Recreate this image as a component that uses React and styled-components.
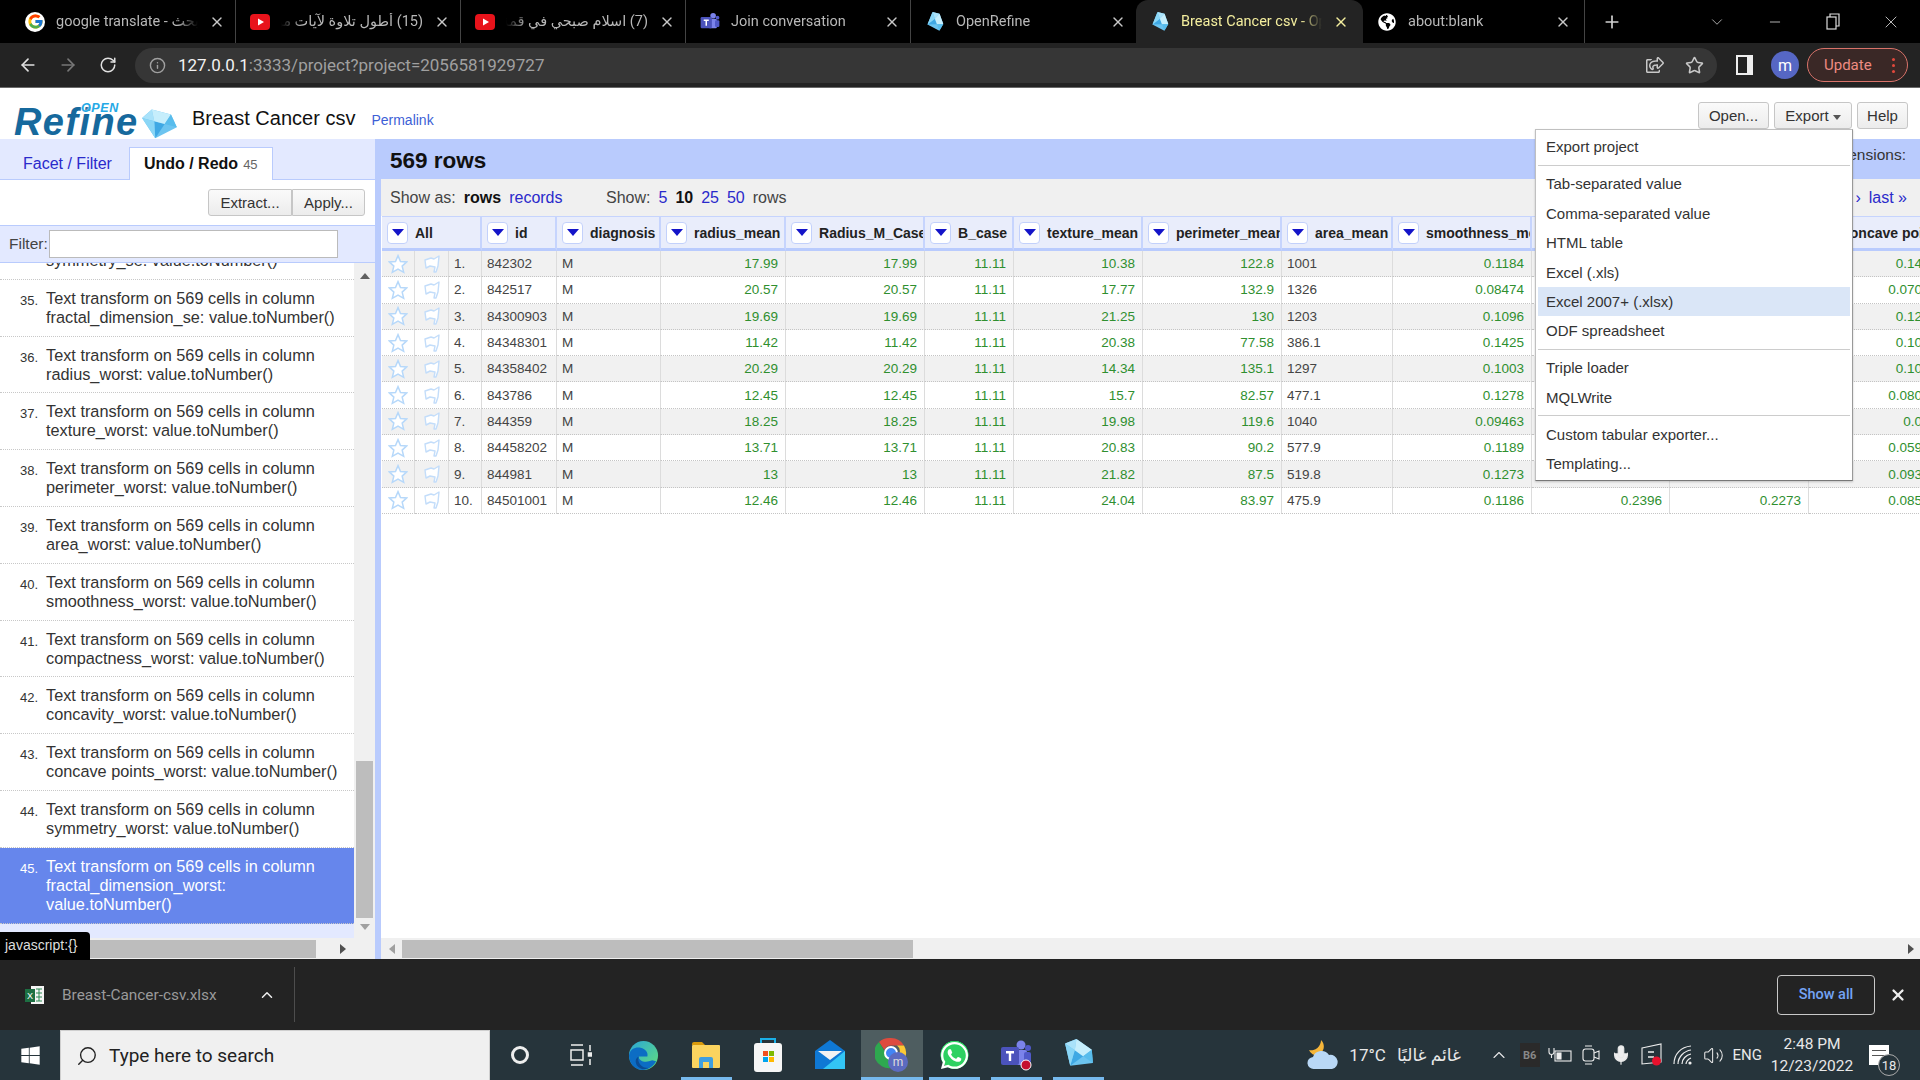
import styled, { createGlobalStyle } from "styled-components";
import { ArrowLeft, ArrowRight, RotateCw, Info, Star, X, Plus, ChevronDown, ChevronUp, Minus, Mic, Volume2, Search } from "lucide-react";
import { FcGoogle } from "react-icons/fc";
import { FaWhatsapp, FaGlobeAmericas, FaWindows, FaRegShareSquare } from "react-icons/fa";

const GlobalStyle = createGlobalStyle`
  html, body { margin: 0; padding: 0; width: 1920px; height: 1080px; overflow: hidden; background: #fff; }
  body { font-family: "Liberation Sans", Arial, sans-serif; }
  * { box-sizing: border-box; }
`;

const UI_FONT = `Roboto, "DejaVu Sans", sans-serif`;

const Frame = styled.div`
  display: flex;
  flex-direction: column;
  width: 1920px;
  height: 1080px;
`;

/* ---------- browser chrome ---------- */
const TabStrip = styled.div`
  display: flex;
  align-items: flex-end;
  height: 43px;
  background: #000;
  padding-left: 11px;
  font-family: ${UI_FONT};
`;

const Tab = styled.div`
  display: flex;
  align-items: center;
  gap: 11px;
  width: ${(p) => p.$w || 225}px;
  height: 43px;
  padding: 0 ${(p) => p.$pr || 10}px 0 14px;
  color: ${(p) => (p.$active ? "#f4ee9e" : "#b8b8b8")};
  background: ${(p) => (p.$active ? "#232323" : "transparent")};
  border-radius: ${(p) => (p.$active ? "12px 12px 0 0" : "0")};
  border-right: ${(p) => (p.$active || p.$noSep ? "none" : "1px solid #444")};
  font-size: 14.5px;
`;

const TabTitle = styled.div`
  flex: 1;
  overflow: hidden;
  white-space: nowrap;
  direction: ${(p) => (p.$rtl ? "rtl" : "ltr")};
  mask-image: ${(p) =>
    p.$rtl
      ? "linear-gradient(to left, #000 85%, transparent)"
      : "linear-gradient(to right, #000 85%, transparent)"};
`;

const Favicon = styled.span`
  display: inline-flex;
  align-items: center;
  justify-content: center;
  width: 20px;
  height: 20px;
  flex: none;
  border-radius: ${(p) => (p.$round ? "50%" : "0")};
  background: ${(p) => (p.$round ? "#fff" : "transparent")};
`;

const TabClose = styled(X)`
  flex: none;
  width: 16px;
  height: 16px;
  color: ${(p) => p.color || "#c8c8c8"};
`;

const NewTab = styled.div`
  display: flex;
  align-items: center;
  height: 43px;
  margin-left: 17px;
  color: #d0d0d0;
`;

const WindowControls = styled.div`
  display: flex;
  align-items: center;
  height: 43px;
  margin-left: auto;
  color: #ddd;
`;

const WindowButton = styled.div`
  display: flex;
  align-items: center;
  justify-content: center;
  width: 58px;
`;

const Toolbar = styled.div`
  display: flex;
  align-items: center;
  height: 45px;
  background: #232323;
  border-bottom: 1px solid #6a6a6a;
  font-family: ${UI_FONT};
  color: #dcdcdc;
`;

const NavButton = styled.div`
  display: flex;
  justify-content: center;
  width: 40px;
  color: ${(p) => (p.$dim ? "#777" : "#e0e0e0")};
  &:first-child { margin-left: 8px; }
`;

const UrlBox = styled.div`
  display: flex;
  align-items: center;
  width: 1582px;
  height: 35px;
  margin-left: 7px;
  padding: 0 13px 0 14px;
  border-radius: 18px;
  background: #363636;
  font-size: 17px;
  color: #a0a0a0;
`;

const UrlHost = styled.span`
  color: #f2f2f2;
  margin-left: 12px;
`;

const UrlActions = styled.div`
  display: flex;
  gap: 21px;
  align-items: center;
  margin-left: auto;
  color: #c8c8c8;
`;

const SidePanelIcon = styled.span`
  width: 17px;
  height: 20px;
  margin-left: 19px;
  border: 2px solid #eee;
  border-right-width: 6px;
  flex: none;
`;

const Avatar = styled.span`
  display: flex;
  align-items: center;
  justify-content: center;
  width: 28px;
  height: 28px;
  margin-left: 18px;
  border-radius: 50%;
  background: #5667c4;
  color: #fff;
  font-size: 16px;
  flex: none;
`;

const UpdatePill = styled.div`
  display: flex;
  align-items: center;
  justify-content: space-between;
  width: 101px;
  height: 34px;
  margin-left: 8px;
  padding: 0 12px 0 16px;
  border: 1px solid #d9736a;
  border-radius: 17px;
  background: #3a2826;
  color: #ee8b82;
  font-size: 15px;
`;

const RedDots = styled.span`
  width: 3px;
  height: 3px;
  border-radius: 50%;
  background: #e2483c;
  box-shadow: 0 -6px 0 #e2483c, 0 6px 0 #e2483c;
`;

/* ---------- page ---------- */
const Page = styled.div`
  position: relative;
  display: flex;
  flex-direction: column;
  height: 871px;
  color: #222;
`;

const Header = styled.header`
  display: flex;
  align-items: center;
  height: 51px;
  padding: 9px 0 0 14px;
  flex: none;
`;

const Logo = styled.div`
  position: relative;
  display: flex;
  align-items: center;
  width: 178px;
  height: 50px;
`;

const LogoWord = styled.span`
  font: italic bold 38px "Liberation Sans", Arial, sans-serif;
  letter-spacing: 1.4px;
  color: #16699d;
  margin-top: 9px;
`;

const LogoOpen = styled.span`
  position: absolute;
  left: 67px;
  top: 8px;
  font: italic bold 12.5px "Liberation Sans", Arial, sans-serif;
  letter-spacing: 0.6px;
  color: #25a9e6;
  text-shadow: 0 0 2px #fff;
`;

const LogoGem = styled.span`
  display: flex;
  margin-left: 2px;
  margin-top: 12px;
`;

const ProjectName = styled.span`
  font-size: 20px;
  color: #111;
`;

const Permalink = styled.a`
  font-size: 14px;
  margin-left: 16px;
  margin-top: 3px;
  color: #3d5fd6;
`;

const HeaderButtons = styled.div`
  display: flex;
  gap: 5px;
  margin-left: auto;
  padding-right: 12px;
  margin-top: -5px;
`;

const GreyButton = styled.button`
  display: inline-flex;
  align-items: center;
  justify-content: center;
  gap: 4px;
  width: ${(p) => p.$w}px;
  height: 27px;
  padding: 0;
  border: 1px solid #c6c6c6;
  border-radius: ${(p) => p.$radius || "3px"};
  background: linear-gradient(#fafafa, #ececec);
  font: 15px "Liberation Sans", Arial, sans-serif;
  color: #333;
`;

const Caret = styled.span`
  width: 0;
  height: 0;
  border-left: 4px solid transparent;
  border-right: 4px solid transparent;
  border-top: 5px solid #555;
  margin-top: 3px;
`;

const Main = styled.div`
  display: flex;
  flex: 1;
  min-height: 0;
`;

const LeftPanel = styled.aside`
  display: flex;
  flex-direction: column;
  width: 375px;
  flex: none;
  background: #e3e9ff;
`;

const LeftTabs = styled.div`
  display: flex;
  align-items: flex-end;
  height: 41px;
  flex: none;
  border-bottom: 1px solid #b9cbfd;
`;

const LeftTab = styled.div`
  display: flex;
  align-items: baseline;
  gap: 5px;
  height: ${(p) => (p.$active ? "33px" : "32px")};
  padding: 7px 14px 0;
  margin-left: ${(p) => (p.$active ? "3px" : "9px")};
  margin-bottom: -1px;
  font-size: 16px;
  font-weight: ${(p) => (p.$active ? "bold" : "normal")};
  color: ${(p) => (p.$active ? "#111" : "#2a2acb")};
  background: ${(p) => (p.$active ? "#fff" : "transparent")};
  border: ${(p) => (p.$active ? "1px solid #b9cbfd" : "none")};
  border-bottom: none;
`;

const TabCount = styled.span`
  font-size: 13px;
  font-weight: normal;
  color: #666;
`;

const ExtractRow = styled.div`
  display: flex;
  justify-content: flex-end;
  align-items: center;
  height: 45px;
  flex: none;
  padding: 0 10px 0 0;
  background: #fff;
`;

const FilterRow = styled.div`
  display: flex;
  align-items: center;
  height: 38px;
  flex: none;
  padding-left: 9px;
  font-size: 15.5px;
  color: #444;
  border-top: 1px solid #b9cbfd;
  border-bottom: 1px solid #b9cbfd;
`;

const FilterInput = styled.div`
  width: 289px;
  height: 28px;
  margin-left: 1px;
  background: #fff;
  border: 1px solid #bbb;
`;

const ListArea = styled.div`
  display: flex;
  flex: 1;
  min-height: 0;
`;

const HistoryList = styled.div`
  flex: 1;
  overflow: hidden;
`;

const HistoryInner = styled.div`
  margin-top: -40px;
`;

const HistoryItem = styled.div`
  display: flex;
  padding: 9px 8px 8.8px 20px;
  line-height: 19px;
  font-size: 16.3px;
  color: ${(p) => (p.$current ? "#fff" : "#333")};
  background: ${(p) => (p.$current ? "#6686ec" : "#fff")};
  border-bottom: 1px dotted #c8c8c8;
`;

const HistoryNum = styled.span`
  width: 26px;
  flex: none;
  font-size: 13px;
  padding-top: 2px;
`;

const VScroll = styled.div`
  display: flex;
  flex-direction: column;
  align-items: center;
  width: 21px;
  flex: none;
  background: #f0f0f0;
`;

const VThumb = styled.div`
  width: 17px;
  height: 157px;
  margin-top: auto;
  background: #bdbdbd;
`;

const ArrowUp = styled.span`
  margin: 10px 0 0;
  border-left: 5px solid transparent;
  border-right: 5px solid transparent;
  border-bottom: 6px solid #606060;
`;

const ArrowDown = styled.span`
  margin: 6px 0 8px;
  border-left: 5px solid transparent;
  border-right: 5px solid transparent;
  border-top: 6px solid #a0a0a0;
`;

const HScroll = styled.div`
  display: flex;
  align-items: center;
  height: 21px;
  flex: none;
  background: #f0f0f0;
`;

const HThumb = styled.div`
  height: 18px;
  width: ${(p) => p.$w}px;
  margin-left: ${(p) => p.$ml}px;
  background: #bdbdbd;
`;

const ArrowRightTri = styled.span`
  margin-left: ${(p) => p.$ml || "auto"};
  margin-right: ${(p) => p.$mr || 0}px;
  border-top: 5px solid transparent;
  border-bottom: 5px solid transparent;
  border-left: 6px solid #505050;
`;

const ArrowLeftTri = styled.span`
  margin-left: 8px;
  border-top: 5px solid transparent;
  border-bottom: 5px solid transparent;
  border-right: 6px solid #a0a0a0;
`;

const RightPanel = styled.section`
  display: flex;
  flex-direction: column;
  flex: 1;
  min-width: 0;
  border-left: 6px solid #b9cbfd;
`;

const TitleBar = styled.div`
  display: flex;
  align-items: center;
  justify-content: space-between;
  height: 40px;
  flex: none;
  margin-left: -6px;
  padding: 3px 14px 0 15px;
  background: #b9cbfd;
`;

const RowCount = styled.h2`
  margin: 0;
  font-size: 22.5px;
  color: #111;
`;

const ExtensionsLabel = styled.span`
  margin-top: -11px;
  font-size: 15.5px;
  color: #333;
`;

const ShowBar = styled.div`
  display: flex;
  align-items: center;
  height: 37px;
  flex: none;
  padding: 0 13px 0 9px;
  background: #f0f0f0;
  font-size: 16px;
  color: #444;
`;

const ShowGroup = styled.div`
  display: flex;
  gap: ${(p) => p.$gap || 8}px;
  width: ${(p) => p.$w || "auto"};
`;

const Strong = styled.b`
  color: #111;
`;

const BlueLink = styled.a`
  color: #2a2acb;
`;

const Pager = styled.div`
  display: flex;
  gap: 8px;
  margin-left: auto;
`;

const TableWrap = styled.div`
  flex: 1;
  min-height: 0;
  overflow: hidden;
`;

const DataTable = styled.table`
  width: 1563px;
  margin-left: 1px;
  table-layout: fixed;
  border-collapse: separate;
  border-spacing: 0;
  font-size: 13.5px;
`;

const HeadCell = styled.th`
  height: 35px;
  padding: 0 0 0 5px;
  background: #e9edfb;
  border-top: 1px solid #c6d4fd;
  border-bottom: 3px solid #b9cbfd;
  border-right: 2px solid #c6d4fd;
  text-align: left;
  font-size: 14px;
  font-weight: bold;
  color: #222;
`;

const HeadInner = styled.div`
  display: flex;
  align-items: center;
  gap: 7px;
  overflow: hidden;
  white-space: nowrap;
`;

const ColumnMenuButton = styled.span`
  display: flex;
  align-items: center;
  justify-content: center;
  width: 21px;
  height: 22px;
  flex: none;
  background: #fff;
  border: 1px solid #c3d1fb;
  border-radius: 4px;
`;

const BlueTriangle = styled.span`
  border-left: 6px solid transparent;
  border-right: 6px solid transparent;
  border-top: 7px solid #1414c8;
`;

const BodyRow = styled.tr`
  background: ${(p) => (p.$odd ? "#f1f1f1" : "#fff")};
`;

const Cell = styled.td`
  height: 26.3px;
  padding: ${(p) => (p.$num ? "0 7px 0 5px" : "0 5px")};
  border-bottom: 1px dotted #c4c4c4;
  border-right: 1px solid #dcdcdc;
  text-align: ${(p) => (p.$num ? "right" : "left")};
  color: ${(p) => (p.$num ? "#2f8f2f" : "#444")};
  white-space: nowrap;
  overflow: hidden;
`;

const IconCell = styled(Cell)`
  padding: 0;
  text-align: center;
  line-height: 0;
`;

/* ---------- export menu ---------- */
const ExportMenu = styled.div`
  position: absolute;
  top: 41px;
  right: 67px;
  width: 318px;
  height: 352px;
  padding: 2px;
  background: #fff;
  border: 1px solid #c0c0c0;
  border-bottom-color: #777;
  border-right-color: #999;
  box-shadow: 0 1px 2px rgba(0, 0, 0, 0.2);
  font-size: 15px;
  color: #333;
`;

const MenuItem = styled.div`
  display: flex;
  align-items: center;
  height: 29.4px;
  padding-left: 8px;
  background: ${(p) => (p.$hover ? "#dae6f7" : "transparent")};
`;

const MenuSeparator = styled.div`
  height: 1px;
  margin: 3.4px 0;
  background: #ccc;
`;

const StatusBubble = styled.div`
  position: absolute;
  left: 0;
  bottom: -1px;
  width: 90px;
  height: 28px;
  padding: 5px 0 0 5px;
  background: #000;
  border-top-right-radius: 4px;
  color: #ddd;
  font-size: 14px;
`;

/* ---------- download bar ---------- */
const DownloadBar = styled.div`
  display: flex;
  align-items: center;
  height: 71px;
  flex: none;
  background: #232323;
  font-family: ${UI_FONT};
`;

const DownloadItem = styled.div`
  display: flex;
  align-items: center;
  width: 295px;
  height: 55px;
  padding-left: 25px;
  border-right: 1px solid #4d4d4d;
  color: #9a9a9a;
  font-size: 15.4px;
`;

const DownloadName = styled.span`
  margin-left: 17px;
  width: 196px;
`;

const ShowAll = styled.div`
  display: flex;
  align-items: center;
  justify-content: center;
  width: 98px;
  height: 40px;
  margin-left: auto;
  border: 1px solid #c8c8c8;
  border-radius: 4px;
  color: #74a3f5;
  font-size: 14.5px;
  font-weight: 500;
`;

const CloseBar = styled.div`
  display: flex;
  justify-content: center;
  width: 45px;
  color: #eee;
`;

/* ---------- taskbar ---------- */
const Taskbar = styled.div`
  display: flex;
  align-items: center;
  height: 50px;
  flex: none;
  background: #26343b;
  color: #eee;
  font-family: ${UI_FONT};
`;

const StartButton = styled.div`
  display: flex;
  align-items: center;
  justify-content: center;
  width: 60px;
  color: #fff;
`;

const SearchBox = styled.div`
  display: flex;
  align-items: center;
  gap: 11px;
  width: 430px;
  height: 50px;
  padding-left: 15px;
  background: #f0f0f0;
  border: 1px solid #cfcfcf;
  border-width: 1px 1px 0;
  color: #222;
  font-size: 19px;
`;

const TaskSlot = styled.div`
  display: flex;
  align-items: center;
  justify-content: center;
  width: ${(p) => p.$w || 62}px;
  height: 50px;
  background-color: ${(p) => (p.$active ? "#4e5d60" : "transparent")};
  background-image: ${(p) => (p.$open ? "linear-gradient(#76b9ed, #76b9ed)" : "none")};
  background-repeat: no-repeat;
  background-position: center bottom;
  background-size: ${(p) => (p.$active ? "100%" : "51px")} 3px;
`;

const CortanaRing = styled.span`
  width: 18px;
  height: 18px;
  border: 3px solid #eee;
  border-radius: 50%;
`;

const Tray = styled.div`
  display: flex;
  align-items: center;
  margin-left: auto;
  height: 50px;
  font-size: 15px;
  color: #e8e8e8;
`;

const TrayWeather = styled.div`
  display: flex;
  align-items: center;
  gap: 11px;
  font-size: 17px;
  margin-right: 23px;
`;

const TrayIconSlot = styled.div`
  display: flex;
  align-items: center;
  justify-content: center;
  width: 30.6px;
`;

const TrayLang = styled.span`
  margin-left: 4px;
`;

const TrayClock = styled.div`
  width: 100px;
  text-align: center;
  line-height: 22px;
  font-size: 15.5px;
`;

const NotifyBox = styled.div`
  position: relative;
  width: 20px;
  height: 20px;
  margin: 0 31px 0 7px;
  padding: 5px 3px;
  background: #fff;
`;

const NotifyLines = styled.div`
  height: 6px;
  border-top: 1px solid #555;
  border-bottom: 1px solid #555;
`;

const NotifyBadge = styled.span`
  position: absolute;
  right: -11px;
  bottom: -11px;
  display: flex;
  align-items: center;
  justify-content: center;
  width: 22px;
  height: 22px;
  border-radius: 50%;
  background: #26343b;
  border: 1px solid #aaa;
  font-size: 13px;
`;

function Gem({ size = 20, angle = 0 }) {
  return (
    <svg width={size} height={size * 0.8} viewBox="0 0 40 32" style={{ transform: `rotate(${angle}deg)` }}>
      <polygon points="8,2 30,2 40,14 20,32 0,14" fill="#6cc4f0" />
      <polygon points="8,2 14,14 0,14" fill="#a9e2fa" />
      <polygon points="14,14 26,14 20,32" fill="#3fa8e4" />
      <polygon points="8,2 30,2 26,14 14,14" fill="#c6eefc" />
      <polygon points="30,2 40,14 26,14" fill="#58bcec" />
      <polygon points="0,14 14,14 20,32" fill="#8ad6f6" />
    </svg>
  );
}

function YoutubeIcon() {
  return (
    <svg width="20" height="20" viewBox="0 0 20 20">
      <rect x="0" y="2" width="20" height="16" rx="4" fill="#e8131b" />
      <polygon points="8,6.5 14,10 8,13.5" fill="#fff" />
    </svg>
  );
}

function TeamsIcon({ size = 20, dot }) {
  return (
    <svg width={size} height={size} viewBox="0 0 32 32">
      <circle cx="21" cy="6" r="4.5" fill="#7b83eb" />
      <circle cx="28" cy="9" r="3" fill="#5059c9" />
      <rect x="14" y="11" width="13" height="15" rx="2" fill="#7b83eb" />
      <rect x="24" y="13" width="7" height="11" rx="2" fill="#5059c9" />
      <rect x="1" y="8" width="18" height="18" rx="2" fill="#4b53bc" />
      <path d="M6 12h8v2.4h-2.8V22H8.8v-7.6H6z" fill="#fff" />
      {dot && <circle cx="26" cy="26" r="5" fill="#c50f2f" stroke="#fff" />}
    </svg>
  );
}

function EdgeIcon() {
  return (
    <svg width="31" height="31" viewBox="0 0 32 32">
      <defs>
        <linearGradient id="edgeTop" x1="0" y1="0" x2="1" y2="1">
          <stop offset="0" stopColor="#2aa6d8" />
          <stop offset="1" stopColor="#63e07a" />
        </linearGradient>
      </defs>
      <circle cx="16" cy="16" r="15" fill="url(#edgeTop)" />
      <path d="M1 16C2 9 8 7 13 8c5 1 8 5 7 9H11c0 5 7 7 14 4l4 1c-3 6-9 9-14 9C7 31 1 24 1 16z" fill="#0c6dc4" />
      <path d="M11 17c-2 6 3 12 10 12-5 3-12 0-13-6-.5-3 1-5 3-6z" fill="#0b4c94" />
    </svg>
  );
}

function ExplorerIcon() {
  return (
    <svg width="30" height="28" viewBox="0 0 30 28">
      <path d="M1 3a2 2 0 0 1 2-2h8l3 3h-13z" fill="#d99a0b" />
      <rect x="1" y="4" width="28" height="23" rx="1" fill="#fbd45f" />
      <path d="M8 27v-9a2 2 0 0 1 2-2h10a2 2 0 0 1 2 2v9h-4v-6h-6v6z" fill="#3f9fe0" />
    </svg>
  );
}

function StoreIcon() {
  return (
    <svg width="30" height="36" viewBox="0 0 30 36">
      <path d="M8 7V2h14v5" fill="none" stroke="#1ab0e8" strokeWidth="2" />
      <rect x="1" y="6" width="28" height="29" rx="3" fill="#f6f6f6" />
      <rect x="10" y="14" width="5" height="5" fill="#f25022" />
      <rect x="16" y="14" width="5" height="5" fill="#7fba00" />
      <rect x="10" y="20" width="5" height="5" fill="#00a4ef" />
      <rect x="16" y="20" width="5" height="5" fill="#ffb900" />
    </svg>
  );
}

function MailIcon() {
  return (
    <svg width="30" height="30" viewBox="0 0 30 30">
      <polygon points="0,11 15,0 30,11 30,29 0,29" fill="#0f78d4" />
      <polygon points="3,11 27,11 15,20" fill="#f2f2f2" />
      <polygon points="30,11 30,29 8,29" fill="#33c5f5" />
    </svg>
  );
}

function ChromeIcon() {
  return (
    <svg width="34" height="38" viewBox="0 0 34 38">
      <path d="M16 2a15 15 0 0 1 13 7.5H16a7 7 0 0 0-6.5 4.5L4 6a15 15 0 0 1 12-4z" fill="#dd4b3e" />
      <path d="M29 9.5a15 15 0 0 1-13 22.5l6.500-11.500a7 7 0 0 0-.5-11z" fill="#fcc934" />
      <path d="M16 32A15 15 0 0 1 4 6l6 10a7 7 0 0 0 12 4.500z" fill="#2ea84f" />
      <circle cx="16" cy="17" r="6" fill="#4285f4" stroke="#fff" strokeWidth="2" />
      <circle cx="23" cy="26" r="10" fill="#5c6bc0" />
      <text x="23" y="30" textAnchor="middle" fontSize="12" fill="#ddd" fontFamily="Roboto, sans-serif">m</text>
    </svg>
  );
}

const WhatsappDisc = styled.span`
  display: flex;
  color: #fff;
  background: radial-gradient(circle at 50% 48%, #2dd161 62%, transparent 64%);
`;

function FlagIcon() {
  return (
    <svg width="18" height="20" viewBox="0 0 18 20">
      <path d="M2 6l6-2 3 1 5-3-1 10-2 6h-2l1-5-5-1-4 2z" fill="#fff" stroke="#c3ddfa" strokeWidth="1.4" strokeLinejoin="round" />
    </svg>
  );
}

function RowStar() {
  return (
    <svg width="20" height="20" viewBox="0 0 24 24">
      <polygon points="12,2 15,9 22.500,9.500 17,14.500 18.800,22 12,18 5.200,22 7,14.500 1.500,9.500 9,9" fill="#fff" stroke="#b6d8fa" strokeWidth="1.800" />
    </svg>
  );
}

function ExcelIcon() {
  return (
    <svg width="20" height="20" viewBox="0 0 20 20">
      <rect x="6" y="1" width="13" height="18" fill="#f4f4f4" />
      <path d="M11 4h6M11 8h6M11 12h6M11 16h6M14 4v12" stroke="#2c8a52" strokeWidth="1" />
      <rect x="0" y="4" width="10" height="13" fill="#1d6f42" />
      <text x="5" y="14" textAnchor="middle" fontSize="9" fill="#fff" fontFamily="Liberation Sans">X</text>
    </svg>
  );
}

function WeatherIcon() {
  return (
    <svg width="32" height="32" viewBox="0 0 32 32">
      <path d="M15 1a9 9 0 0 1-3 15 8 8 0 0 1-9-5 10 10 0 0 0 12-10z" fill="#f6b63a" />
      <path d="M8 30a6 6 0 0 1-1-12 9 9 0 0 1 16-2 7 7 0 0 1 3 14z" fill="#b9d8f6" />
    </svg>
  );
}

function RestoreIcon() {
  return (
    <svg width="15" height="17" viewBox="0 0 15 17" fill="none" stroke="#ddd" strokeWidth="1.200">
      <rect x="1" y="4" width="9" height="12" />
      <path d="M4 4V1h9v12h-3" />
    </svg>
  );
}

function PlugBatteryIcon() {
  return (
    <svg width="24" height="16" viewBox="0 0 24 16" fill="none" stroke="#eee" strokeWidth="1.100">
      <rect x="7" y="4" width="16" height="10" />
      <rect x="9" y="6" width="4" height="6" fill="#eee" />
      <path d="M1 1v4a2.500 2.500 0 0 0 5 0V1M3.500 8v3" />
    </svg>
  );
}

function MeetIcon() {
  return (
    <svg width="20" height="22" viewBox="0 0 20 22" fill="none" stroke="#eee" strokeWidth="1.100">
      <rect x="2" y="5" width="11" height="12" rx="2.500" />
      <path d="M13 9l5-2v8l-5-2" />
      <path d="M4 2h7M4 20h7" />
    </svg>
  );
}

function ScreenRecordIcon() {
  return (
    <svg width="22" height="24" viewBox="0 0 22 24">
      <path d="M1 5l19-4v18l-19 2z" fill="none" stroke="#eee" strokeWidth="1.100" />
      <path d="M7 9h6M7 14h6" stroke="#eee" strokeWidth="1.500" />
      <circle cx="15.500" cy="18" r="4.500" fill="#e8112d" />
    </svg>
  );
}

function WifiCornerIcon() {
  return (
    <svg width="20" height="20" viewBox="0 0 20 20" fill="none" stroke="#eee" strokeWidth="1.200">
      <path d="M1 19C1 9 8 2 18 1M5 19C5 12 11 6 18 5M9 19c0-5 4-9 9-10M13 19c0-2 2-5 5-6" />
      <circle cx="17" cy="18" r="1.600" fill="#eee" stroke="none" />
    </svg>
  );
}

const BrandBox = styled.span`
  display: flex;
  align-items: center;
  justify-content: center;
  width: 20px;
  height: 24px;
  background: #2a2a2a;
  color: #888;
  font-size: 11px;
  font-weight: bold;
`;

const historyRows = [
  [34, "symmetry_se: value.toNumber()"],
  [35, "fractal_dimension_se: value.toNumber()"],
  [36, "radius_worst: value.toNumber()"],
  [37, "texture_worst: value.toNumber()"],
  [38, "perimeter_worst: value.toNumber()"],
  [39, "area_worst: value.toNumber()"],
  [40, "smoothness_worst: value.toNumber()"],
  [41, "compactness_worst: value.toNumber()"],
  [42, "concavity_worst: value.toNumber()"],
  [43, "concave points_worst: value.toNumber()"],
  [44, "symmetry_worst: value.toNumber()"],
  [45, "fractal_dimension_worst: value.toNumber()"],
];

const colWidths = [33, 34, 33, 75, 104, 125, 139, 89, 129, 139, 111, 139, 138, 139, 136];

const columns = [
  "id", "diagnosis", "radius_mean", "Radius_M_Case", "B_case", "texture_mean", "perimeter_mean",
  "area_mean", "smoothness_mean", "compactness_mean", "concavity_mean", "concave points_mean",
];

const rows = [
  ["842302", "M", "17.99", "17.99", "11.11", "10.38", "122.8", "1001", "0.1184", "0.2776", "0.3001", "0.1471"],
  ["842517", "M", "20.57", "20.57", "11.11", "17.77", "132.9", "1326", "0.08474", "0.07864", "0.0869", "0.07017"],
  ["84300903", "M", "19.69", "19.69", "11.11", "21.25", "130", "1203", "0.1096", "0.1599", "0.1974", "0.1279"],
  ["84348301", "M", "11.42", "11.42", "11.11", "20.38", "77.58", "386.1", "0.1425", "0.2839", "0.2414", "0.1052"],
  ["84358402", "M", "20.29", "20.29", "11.11", "14.34", "135.1", "1297", "0.1003", "0.1328", "0.198", "0.1043"],
  ["843786", "M", "12.45", "12.45", "11.11", "15.7", "82.57", "477.1", "0.1278", "0.17", "0.1578", "0.08089"],
  ["844359", "M", "18.25", "18.25", "11.11", "19.98", "119.6", "1040", "0.09463", "0.109", "0.1127", "0.074"],
  ["84458202", "M", "13.71", "13.71", "11.11", "20.83", "90.2", "577.9", "0.1189", "0.1645", "0.09366", "0.05985"],
  ["844981", "M", "13", "13", "11.11", "21.82", "87.5", "519.8", "0.1273", "0.1932", "0.1859", "0.09353"],
  ["84501001", "M", "12.46", "12.46", "11.11", "24.04", "83.97", "475.9", "0.1186", "0.2396", "0.2273", "0.08543"],
];

// columns holding text rather than numbers
const textColumns = [0, 1, 7];

const menuGroups = [
  ["Export project"],
  ["Tab-separated value", "Comma-separated value", "HTML table", "Excel (.xls)", "Excel 2007+ (.xlsx)", "ODF spreadsheet"],
  ["Triple loader", "MQLWrite"],
  ["Custom tabular exporter...", "Templating..."],
];

export default function App() {
  return (
    <Frame>
      <GlobalStyle />
      <TabStrip>
        <Tab>
          <Favicon $round><FcGoogle size={17} /></Favicon>
          <TabTitle>google translate - بحث Google</TabTitle>
          <TabClose />
        </Tab>
        <Tab>
          <Favicon><YoutubeIcon /></Favicon>
          <TabTitle $rtl>(15) أطول تلاوة لآيات من القرآن</TabTitle>
          <TabClose />
        </Tab>
        <Tab>
          <Favicon><YoutubeIcon /></Favicon>
          <TabTitle $rtl>(7) اسلام صبحي في قمة الخشوع</TabTitle>
          <TabClose />
        </Tab>
        <Tab>
          <Favicon><TeamsIcon /></Favicon>
          <TabTitle>Join conversation</TabTitle>
          <TabClose />
        </Tab>
        <Tab $noSep>
          <Favicon><Gem size={22} angle={70} /></Favicon>
          <TabTitle>OpenRefine</TabTitle>
          <TabClose />
        </Tab>
        <Tab $active $w={227} $pr={14}>
          <Favicon><Gem size={22} angle={70} /></Favicon>
          <TabTitle>Breast Cancer csv - OpenRefine</TabTitle>
          <TabClose color="#f4ee9e" />
        </Tab>
        <Tab $w={222} $pr={13}>
          <Favicon><FaGlobeAmericas size={18} color="#fff" /></Favicon>
          <TabTitle>about:blank</TabTitle>
          <TabClose />
        </Tab>
        <NewTab><Plus size={20} /></NewTab>
        <WindowControls>
          <WindowButton><ChevronDown size={18} strokeWidth={1} /></WindowButton>
          <WindowButton><Minus size={16} strokeWidth={1.2} /></WindowButton>
          <WindowButton><RestoreIcon /></WindowButton>
          <WindowButton><X size={20} strokeWidth={1} /></WindowButton>
        </WindowControls>
      </TabStrip>

      <Toolbar>
        <NavButton><ArrowLeft size={20} /></NavButton>
        <NavButton $dim><ArrowRight size={20} /></NavButton>
        <NavButton><RotateCw size={18} /></NavButton>
        <UrlBox>
          <Info size={17} />
          <UrlHost>127.0.0.1</UrlHost>
          :3333/project?project=2056581929727
          <UrlActions>
            <FaRegShareSquare size={18} />
            <Star size={19} />
          </UrlActions>
        </UrlBox>
        <SidePanelIcon />
        <Avatar>m</Avatar>
        <UpdatePill>Update<RedDots /></UpdatePill>
      </Toolbar>

      <Page>
        <Header>
          <Logo>
            <LogoWord>Refine</LogoWord>
            <LogoOpen>OPEN</LogoOpen>
            <LogoGem><Gem size={36} angle={15} /></LogoGem>
          </Logo>
          <ProjectName>Breast Cancer csv</ProjectName>
          <Permalink>Permalink</Permalink>
          <HeaderButtons>
            <GreyButton $w={71}>Open...</GreyButton>
            <GreyButton $w={78}>Export <Caret /></GreyButton>
            <GreyButton $w={51}>Help</GreyButton>
          </HeaderButtons>
        </Header>

        <Main>
          <LeftPanel>
            <LeftTabs>
              <LeftTab>Facet / Filter</LeftTab>
              <LeftTab $active>Undo / Redo <TabCount>45</TabCount></LeftTab>
            </LeftTabs>
            <ExtractRow>
              <GreyButton $w={84} $radius="3px 0 0 3px">Extract...</GreyButton>
              <GreyButton $w={73} $radius="0 3px 3px 0">Apply...</GreyButton>
            </ExtractRow>
            <FilterRow>
              Filter:
              <FilterInput />
            </FilterRow>
            <ListArea>
              <HistoryList>
                <HistoryInner>
                  {historyRows.map(([n, text]) => (
                    <HistoryItem key={n} $current={n === 45}>
                      <HistoryNum>{n}.</HistoryNum>
                      <span>Text transform on 569 cells in column {text}</span>
                    </HistoryItem>
                  ))}
                </HistoryInner>
              </HistoryList>
              <VScroll>
                <ArrowUp />
                <VThumb />
                <ArrowDown />
              </VScroll>
            </ListArea>
            <HScroll>
              <HThumb $w={250} $ml={66} />
              <ArrowRightTri $ml="24px" />
            </HScroll>
          </LeftPanel>

          <RightPanel>
            <TitleBar>
              <RowCount>569 rows</RowCount>
              <ExtensionsLabel>Extensions:</ExtensionsLabel>
            </TitleBar>
            <ShowBar>
              <ShowGroup $gap={8} $w="216px">
                Show as: <Strong>rows</Strong> <BlueLink>records</BlueLink>
              </ShowGroup>
              <ShowGroup $gap={8}>
                Show: <BlueLink>5</BlueLink> <Strong>10</Strong> <BlueLink>25</BlueLink> <BlueLink>50</BlueLink> rows
              </ShowGroup>
              <Pager>
                <BlueLink>next ›</BlueLink>
                <BlueLink>last »</BlueLink>
              </Pager>
            </ShowBar>
            <TableWrap>
              <DataTable>
                <colgroup>
                  {colWidths.map((w, i) => <col key={i} style={{ width: w }} />)}
                </colgroup>
                <thead>
                  <tr>
                    <HeadCell colSpan={3}>
                      <HeadInner>
                        <ColumnMenuButton><BlueTriangle /></ColumnMenuButton>
                        All
                      </HeadInner>
                    </HeadCell>
                    {columns.map((c) => (
                      <HeadCell key={c}>
                        <HeadInner>
                          <ColumnMenuButton><BlueTriangle /></ColumnMenuButton>
                          {c}
                        </HeadInner>
                      </HeadCell>
                    ))}
                  </tr>
                </thead>
                <tbody>
                  {rows.map((row, i) => (
                    <BodyRow key={row[0]} $odd={i % 2 === 0}>
                      <IconCell><RowStar /></IconCell>
                      <IconCell><FlagIcon /></IconCell>
                      <Cell>{i + 1}.</Cell>
                      {row.map((v, j) => (
                        <Cell key={j} $num={!textColumns.includes(j)}>{v}</Cell>
                      ))}
                    </BodyRow>
                  ))}
                </tbody>
              </DataTable>
            </TableWrap>
            <HScroll>
              <ArrowLeftTri />
              <HThumb $w={511} $ml={7} />
              <ArrowRightTri $mr={6} />
            </HScroll>
          </RightPanel>
        </Main>

        <ExportMenu>
          {menuGroups.map((group, g) => (
            <div key={g}>
              {g > 0 && <MenuSeparator />}
              {group.map((label) => (
                <MenuItem key={label} $hover={label.includes("2007")}>{label}</MenuItem>
              ))}
            </div>
          ))}
        </ExportMenu>
        <StatusBubble>javascript:{"{}"}</StatusBubble>
      </Page>

      <DownloadBar>
        <DownloadItem>
          <ExcelIcon />
          <DownloadName>Breast-Cancer-csv.xlsx</DownloadName>
          <ChevronUp size={18} color="#eee" />
        </DownloadItem>
        <ShowAll>Show all</ShowAll>
        <CloseBar><X size={18} strokeWidth={3} /></CloseBar>
      </DownloadBar>

      <Taskbar>
        <StartButton><FaWindows size={21} /></StartButton>
        <SearchBox>
          <Search size={22} strokeWidth={1.5} style={{ transform: "scaleX(-1)" }} />
          Type here to search
        </SearchBox>
        <TaskSlot $w={60}><CortanaRing /></TaskSlot>
        <TaskSlot $w={62}>
          <svg width="22" height="22" viewBox="0 0 22 22" fill="none" stroke="#eee" strokeWidth="1.500">
            <path d="M1 1h12M1 21h12M1 6h12v10H1zM20 1v6M20 15v6" />
            <rect x="18.500" y="9" width="3" height="3" fill="#eee" />
          </svg>
        </TaskSlot>
        <TaskSlot $w={63}><EdgeIcon /></TaskSlot>
        <TaskSlot $open><ExplorerIcon /></TaskSlot>
        <TaskSlot><StoreIcon /></TaskSlot>
        <TaskSlot><MailIcon /></TaskSlot>
        <TaskSlot $active $open><ChromeIcon /></TaskSlot>
        <TaskSlot $open>
          <WhatsappDisc><FaWhatsapp size={31} /></WhatsappDisc>
        </TaskSlot>
        <TaskSlot $open><TeamsIcon size={32} dot /></TaskSlot>
        <TaskSlot $open><Gem size={34} angle={35} /></TaskSlot>
        <Tray>
          <TrayWeather>
            <WeatherIcon />
            <span>17°C</span>
            <span>غائم غالبًا</span>
          </TrayWeather>
          <TrayIconSlot><ChevronUp size={20} strokeWidth={1.3} /></TrayIconSlot>
          <TrayIconSlot><BrandBox>B6</BrandBox></TrayIconSlot>
          <TrayIconSlot><PlugBatteryIcon /></TrayIconSlot>
          <TrayIconSlot><MeetIcon /></TrayIconSlot>
          <TrayIconSlot><Mic size={22} fill="#eee" strokeWidth={1.3} /></TrayIconSlot>
          <TrayIconSlot><ScreenRecordIcon /></TrayIconSlot>
          <TrayIconSlot><WifiCornerIcon /></TrayIconSlot>
          <TrayIconSlot><Volume2 size={21} strokeWidth={1.2} /></TrayIconSlot>
          <TrayLang>ENG</TrayLang>
          <TrayClock>
            2:48 PM
            <br />
            12/23/2022
          </TrayClock>
          <NotifyBox>
            <NotifyLines />
            <NotifyBadge>18</NotifyBadge>
          </NotifyBox>
        </Tray>
      </Taskbar>
    </Frame>
  );
}
